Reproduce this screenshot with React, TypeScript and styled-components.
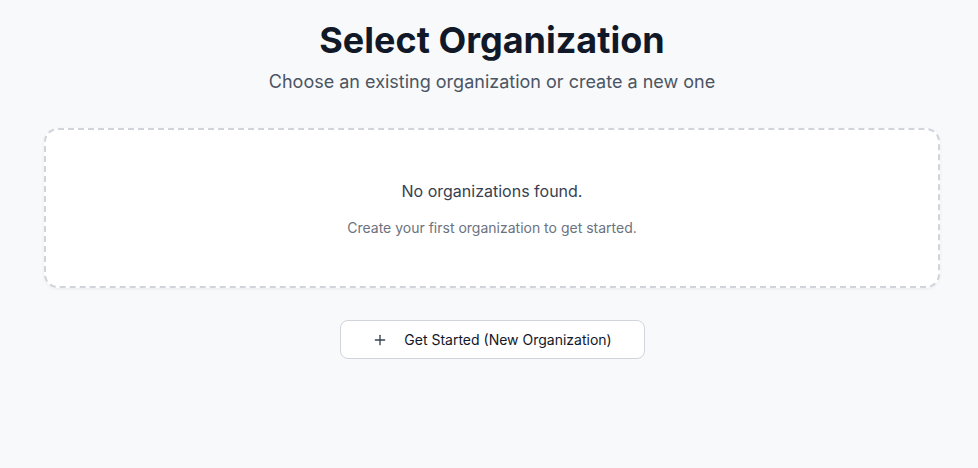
import React from "react";
import styled, { createGlobalStyle } from "styled-components";
import { Plus } from "lucide-react";

const Global = createGlobalStyle`
  html, body { margin: 0; padding: 0; background: #f8f9fb; }
  body { font-family: Inter, "Noto Sans", sans-serif; -webkit-font-smoothing: antialiased; }
`;

const Page = styled.main`
  min-height: 468px;
  box-sizing: border-box;
  padding: 18px 38px 0 44px;
  display: flex;
  flex-direction: column;
  align-items: center;
`;

const Title = styled.h1`
  margin: 0;
  font-size: 36px;
  line-height: 44px;
  font-weight: 700;
  color: #111827;
`;

const Subtitle = styled.p`
  margin: 8px 0 0;
  font-size: 18px;
  line-height: 24px;
  color: #4b5563;
`;

const EmptyCard = styled.section`
  margin-top: 34px;
  align-self: stretch;
  box-sizing: border-box;
  height: 160px;
  background: #fff;
  border: 2px dashed #d1d5db;
  border-radius: 14px;
  box-shadow: 0 1px 3px rgba(0, 0, 0, 0.06);
  display: flex;
  flex-direction: column;
  align-items: center;
  justify-content: center;
  gap: 15px;
`;

const EmptyTitle = styled.p`
  margin: 0;
  font-size: 16px;
  line-height: 24px;
  color: #374151;
`;

const EmptyText = styled.p`
  margin: 0;
  font-size: 14px;
  line-height: 20px;
  color: #6b7280;
`;

const Button = styled.button`
  margin-top: 32px;
  width: 305px;
  height: 39px;
  box-sizing: border-box;
  background: #fff;
  border: 1px solid #d1d5db;
  border-radius: 8px;
  display: flex;
  align-items: center;
  justify-content: center;
  gap: 16px;
  font-family: inherit;
  font-size: 14px;
  color: #111827;
  cursor: pointer;
  svg { color: #374151; }
`;

export default function App() {
  return (
    <>
      <Global />
      <Page>
        <Title>Select Organization</Title>
        <Subtitle>Choose an existing organization or create a new one</Subtitle>
        <EmptyCard>
          <EmptyTitle>No organizations found.</EmptyTitle>
          <EmptyText>Create your first organization to get started.</EmptyText>
        </EmptyCard>
        <Button>
          <Plus size={16} strokeWidth={2} />
          Get Started (New Organization)
        </Button>
      </Page>
    </>
  );
}
